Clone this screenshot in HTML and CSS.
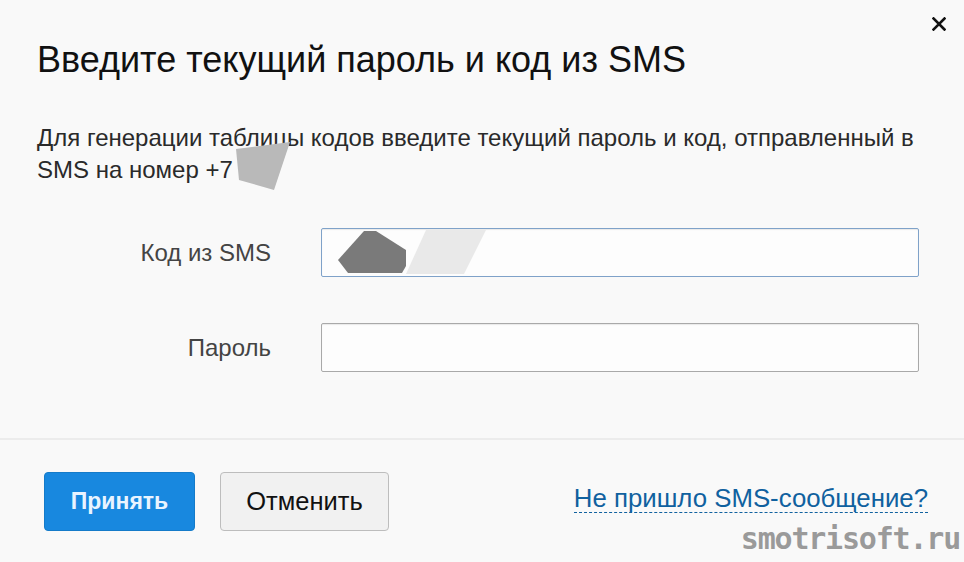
FILE: index.html
```html
<!DOCTYPE html>
<html lang="ru">
<head>
<meta charset="utf-8">
<title>Введите текущий пароль и код из SMS</title>
<link rel="stylesheet" href="styles.css">
</head>
<body>
<div class="dialog">
  <button class="close" aria-label="Закрыть">
    <svg width="14" height="14" viewBox="0 0 14 14"><path d="M1.5 1.5 L12.5 12.5 M12.5 1.5 L1.5 12.5" stroke="#111" stroke-width="2.6" stroke-linecap="square"/></svg>
  </button>
  <div class="content">
    <h1 class="title">Введите текущий пароль и код из SMS</h1>
    <p class="desc">Для генерации таблицы кодов введите текущий пароль и код, отправленный в<br>SMS на номер <span class="phone">+7<svg class="blur-phone" width="54" height="50" viewBox="0 0 54 50"><polygon points="0,7 54,0 38,48 3,38" fill="#b9b9b9"/></svg></span></p>
    <div class="form">
      <label class="label">Код из SMS</label>
      <div class="field">
        <input class="input input-focus" type="text">
        <svg class="blur-code" width="150" height="44" viewBox="0 0 150 44"><polygon points="90,0 150,0 128,44 70,44" fill="#e9e9e9"/><polygon points="28,1 40,1 70,20 70,36 66,43 12,43 2,30" fill="#7a7a7a"/></svg>
      </div>
      <label class="label">Пароль</label>
      <div class="field">
        <input class="input" type="password">
      </div>
    </div>
  </div>
  <div class="footer">
    <button class="btn btn-primary">Принять</button>
    <button class="btn btn-secondary">Отменить</button>
    <a class="link" href="#">Не пришло SMS-сообщение?</a>
  </div>
  <div class="watermark">smotrisoft.ru</div>
</div>
</body>
</html>
```

FILE: styles.css
```css
html, body {
  margin: 0;
  padding: 0;
  background: #f9f9f9;
}
body {
  font-family: "Liberation Sans", Arial, sans-serif;
  color: #222;
  width: 964px;
  height: 562px;
  overflow: hidden;
}
.dialog {
  position: relative;
  width: 964px;
  height: 562px;
}
.close {
  position: absolute;
  top: 17px;
  right: 18px;
  width: 14px;
  height: 14px;
  padding: 0;
  border: 0;
  background: none;
  display: flex;
}
.content {
  box-sizing: border-box;
  padding: 40px 40px 0 37px;
  height: 440px;
  border-bottom: 2px solid #ececec;
}
.title {
  margin: 0;
  font-weight: normal;
  font-size: 36px;
  line-height: 40px;
  color: #111;
  white-space: nowrap;
}
.desc {
  margin: 42px 0 0;
  font-size: 24px;
  line-height: 32px;
  color: #2a2a2a;
  white-space: nowrap;
}
.phone {
  position: relative;
}
.blur-phone {
  position: absolute;
  left: 31px;
  top: -14px;
}
.form {
  margin-top: 42px;
  display: grid;
  grid-template-columns: 234px 598px;
  column-gap: 50px;
  row-gap: 46px;
  align-items: center;
}
.label {
  text-align: right;
  font-size: 24px;
  color: #444;
}
.field {
  position: relative;
}
.input {
  display: block;
  box-sizing: border-box;
  width: 598px;
  height: 49px;
  margin: 0;
  border: 1px solid #a9a9a9;
  border-radius: 2px;
  background: #fdfdfd;
  box-shadow: inset 0 1px 1px rgba(0,0,0,0.08);
}
.input-focus {
  border-color: #7fa2c9;
}
.blur-code {
  position: absolute;
  left: 15px;
  top: 2px;
}
.footer {
  display: flex;
  align-items: center;
  padding: 32px 36px 0 44px;
  gap: 25px;
}
.btn {
  height: 59px;
  border-radius: 4px;
  font-family: "Liberation Sans", Arial, sans-serif;
  padding: 0;
}
.btn-primary {
  width: 151px;
  background: #1888df;
  border: 1px solid #157bc9;
  color: #e9f4ff;
  font-weight: bold;
  font-size: 23px;
}
.btn-secondary {
  width: 169px;
  background: #f1f1f1;
  border: 1px solid #bdbdbd;
  color: #111;
  font-size: 25.5px;
}
.link {
  margin-left: auto;
  font-size: 25.8px;
  color: #10619f;
  text-decoration: none;
  border-bottom: 1.5px dashed #10619f;
  line-height: 27px;
  margin-top: -5px;
}
.watermark {
  position: absolute;
  right: 4px;
  bottom: 6px;
  font-family: "DejaVu Sans Mono", monospace;
  font-weight: bold;
  font-size: 30px;
  color: #9a9a9a;
  letter-spacing: -1.2px;
}
```
